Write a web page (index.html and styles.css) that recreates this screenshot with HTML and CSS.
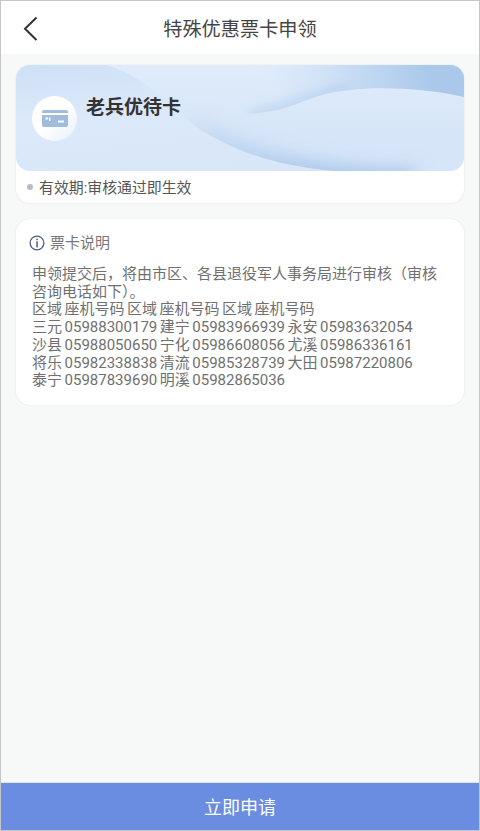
FILE: index.html
```html
<!DOCTYPE html>
<html lang="zh-CN">
<head>
    <meta charset="UTF-8">
    <meta name="viewport" content="width=device-width, initial-scale=1.0">
    <title>特殊优惠票卡申领</title>
    <link rel="stylesheet" href="styles.css">
</head>
<body>
    <div class="page">
        <!-- Header -->
        <header class="top-bar">
            <svg class="back-icon" width="16" height="26" viewBox="0 0 16 26">
                <path d="M13.5 1.5 L2 12.8 L13.5 24" fill="none" stroke="#333" stroke-width="2"/>
            </svg>
            <h1 class="top-title">特殊优惠票卡申领</h1>
        </header>

        <!-- Content -->
        <main class="content">
            <section class="card ticket-card">
                <div class="banner">
                    <svg class="banner-bg" width="448" height="106" viewBox="0 0 448 106">
                        <defs>
                            <linearGradient id="bgBase" x1="0" y1="0" x2="0.5" y2="1">
                                <stop offset="0" stop-color="#cee0f6"/>
                                <stop offset="0.45" stop-color="#dce9fa"/>
                                <stop offset="1" stop-color="#d8e6f8"/>
                            </linearGradient>
                            <linearGradient id="waveBody" gradientUnits="userSpaceOnUse" x1="0" y1="0" x2="0" y2="70">
                                <stop offset="0" stop-color="#e0ecfb"/>
                                <stop offset="1" stop-color="#d6e5f8"/>
                            </linearGradient>
                            <linearGradient id="waveEdge" gradientUnits="userSpaceOnUse" x1="150" y1="50" x2="290" y2="100">
                                <stop offset="0" stop-color="#a6c6e9" stop-opacity="0"/>
                                <stop offset="0.45" stop-color="#a6c6e9" stop-opacity="0.55"/>
                                <stop offset="1" stop-color="#a6c6e9"/>
                            </linearGradient>
                            <linearGradient id="waveTop" gradientUnits="userSpaceOnUse" x1="260" y1="45" x2="415" y2="5">
                                <stop offset="0" stop-color="#a9c8ea" stop-opacity="0"/>
                                <stop offset="0.3" stop-color="#a9c8ea" stop-opacity="0.2"/>
                                <stop offset="1" stop-color="#a9c8ea"/>
                            </linearGradient>
                            <filter id="soft" x="-30%" y="-80%" width="160%" height="260%">
                                <feGaussianBlur stdDeviation="9"/>
                            </filter>
                            <filter id="softer" x="-30%" y="-80%" width="160%" height="260%">
                                <feGaussianBlur stdDeviation="6"/>
                            </filter>
                            <clipPath id="belowBoundary">
                                <path d="M90 0 C120 8 150 34 174 57 C195 74 235 92 271 99 C285 102 300 104 317 106 L448 106 L448 0 Z"/>
                            </clipPath>
                            <clipPath id="aboveRidge">
                                <path d="M180 0 L180 50 C210 50 240 50 261 45 C280 41 300 28 334 25 C365 21 415 24 448 32 L448 0 Z"/>
                            </clipPath>
                        </defs>
                        <rect width="448" height="106" fill="url(#bgBase)"/>
                        <path d="M90 0 C120 8 150 34 174 57 C195 74 235 92 271 99 C285 102 300 104 317 106 L448 106 L448 0 Z" fill="url(#waveBody)"/>
                        <g clip-path="url(#belowBoundary)">
                            <path d="M174 60 C195 77 235 95 271 102 C300 109 350 114 400 114" fill="none" stroke="url(#waveEdge)" stroke-width="20" filter="url(#soft)"/>
                        </g>
                        <g clip-path="url(#aboveRidge)">
                            <rect x="180" width="268" height="60" fill="url(#waveTop)"/>
                            <path d="M235 50 C250 50 255 47 261 45 C280 41 300 28 334 25" fill="none" stroke="#b4cfee" stroke-width="8" filter="url(#softer)"/>
                        </g>
                    </svg>
                    <div class="badge">
                        <svg width="26" height="17" viewBox="0 0 26 17">
                            <path d="M2 0 H24 a2 2 0 0 1 2 2 V3 H0 V2 a2 2 0 0 1 2 -2 Z" fill="#a0bbdc"/>
                            <path d="M0 5 H26 V15 a2 2 0 0 1 -2 2 H2 a2 2 0 0 1 -2 -2 Z" fill="#a0bbdc"/>
                            <rect x="3.5" y="7.5" width="2.5" height="2" fill="#fff"/>
                            <rect x="7" y="7.5" width="1.5" height="3.5" fill="#fff"/>
                            <rect x="16" y="10.5" width="6" height="2" fill="#fff"/>
                        </svg>
                    </div>
                    <h2 class="card-name">老兵优待卡</h2>
                </div>
                <div class="validity">
                    <span class="dot"></span>
                    <span>有效期:审核通过即生效</span>
                </div>
            </section>

            <section class="card notes-card">
                <div class="notes-head">
                    <svg width="16" height="16" viewBox="0 0 16 16">
                        <circle cx="8" cy="8" r="6.9" fill="none" stroke="#4c5a7c" stroke-width="1.3"/>
                        <rect x="7.3" y="3.6" width="1.5" height="1.6" fill="#4c5a7c"/>
                        <rect x="7.3" y="6.4" width="1.5" height="6" fill="#4c5a7c"/>
                    </svg>
                    <span>票卡说明</span>
                </div>
                <p class="notes-text">申领提交后，将由市区、各县退役军人事务局进行审核（审核咨询电话如下）。<br>区域 座机号码 区域 座机号码 区域 座机号码<br>三元 05988300179 建宁 05983966939 永安 05983632054<br>沙县 05988050650 宁化 05986608056 尤溪 05986336161<br>将乐 05982338838 清流 05985328739 大田 05987220806<br>泰宁 05987839690 明溪 05982865036</p>
            </section>
        </main>

        <!-- Apply button -->
        <button class="apply-btn">立即申请</button>
    </div>
</body>
</html>
```

FILE: styles.css
```css
/* General Styles */
html, body {
    height: 100%;
}
body {
    margin: 0;
    padding: 0;
    font-family: Roboto, "Noto Sans CJK SC", sans-serif;
    color: #666;
}
.page {
    box-sizing: border-box;
    height: 831px;
    display: flex;
    flex-direction: column;
    background-color: #f7f9f9;
    border: 1px solid #c6c6c6;
}

/* Header */
.top-bar {
    height: 53px;
    flex-shrink: 0;
    display: flex;
    align-items: center;
    justify-content: center;
    position: relative;
    background-color: #fff;
}
.back-icon {
    position: absolute;
    left: 22px;
    top: 15px;
}
.top-title {
    margin: 0;
    font-size: 19.2px;
    font-weight: normal;
    color: #444;
}

/* Content */
.content {
    flex: 1;
    padding: 11px 15px 0;
    display: flex;
    flex-direction: column;
    gap: 16px;
}
.card {
    background-color: #fff;
    border-radius: 14px;
    box-shadow: 0 0 2px rgba(0, 0, 0, 0.1);
}
.banner {
    height: 106px;
    position: relative;
    display: flex;
    overflow: hidden;
    border-radius: 14px;
}
.banner-bg {
    position: absolute;
    left: 0;
    top: 0;
}
.badge {
    position: relative;
    width: 45px;
    height: 45px;
    margin: 31px 0 0 16px;
    border-radius: 50%;
    background: linear-gradient(135deg, #fff 50%, #e6eff9);
    display: flex;
    align-items: center;
    justify-content: center;
}
.card-name {
    position: relative;
    margin: 30px 0 0 9px;
    font-size: 19px;
    line-height: 26px;
    font-weight: bold;
    color: #333;
}
.validity {
    height: 31px;
    padding-bottom: 1px;
    display: flex;
    align-items: center;
    padding-left: 11px;
    font-size: 14.9px;
    color: #555;
}
.dot {
    width: 6px;
    height: 6px;
    margin-right: 6px;
    border-radius: 50%;
    background-color: #b9bcc6;
}
.notes-card {
    height: 186px;
    box-sizing: border-box;
    padding: 14px 14px 0 13px;
}
.notes-head {
    display: flex;
    align-items: center;
    gap: 5px;
    font-size: 15px;
    line-height: 20px;
    color: #777;
}
.notes-text {
    margin: 13px 0 0 3px;
    font-size: 15px;
    line-height: 17.7px;
    word-spacing: -1.2px;
    color: #707070;
}

/* Apply button */
.apply-btn {
    flex-shrink: 0;
    height: 48px;
    border: 0;
    border-top: 1px solid #dfe3ea;
    background-color: #6a8de2;
    color: #fff;
    font-family: inherit;
    font-size: 18px;
    padding: 0 0 2px;
}
```
